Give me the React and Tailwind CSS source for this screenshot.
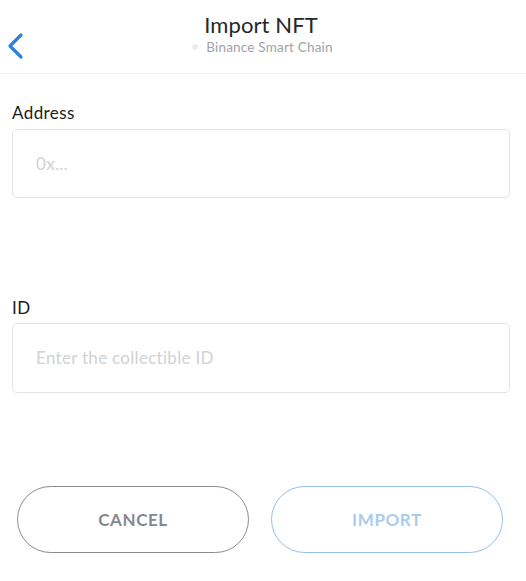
export default function App() {
  return (
    <div className="w-[526px] h-[581px] bg-white flex flex-col font-['Lato',sans-serif] text-[#24272a]">
      <header className="relative h-[74px] border-b border-[#f0f0f0] flex flex-col items-center">
        <button className="absolute left-[6px] top-[32px] p-0" aria-label="Back">
          <svg width="20" height="28" viewBox="0 0 20 28" fill="none">
            <path d="M15 3 L4 14 L15 25" stroke="#2f80d9" strokeWidth="3.2" strokeLinecap="round" strokeLinejoin="round" />
          </svg>
        </button>
        <h1 className="mt-[11px] pr-[4px] text-[22px] leading-[28px] tracking-[0.1px] text-[#24272a]">Import NFT</h1>
        <div className="flex items-center gap-[8px] pr-[1px]">
          <span className="w-[6px] h-[6px] rounded-full bg-[#ececec]" />
          <span className="text-[13.5px] leading-[16px] tracking-[0.2px] text-[#9fa3a8]">Binance Smart Chain</span>
        </div>
      </header>

      <main className="flex flex-col px-[12px] pt-[28px]">
        <label className="text-[17px] leading-[22px] tracking-[0.4px] text-[#1c1c1c]">Address</label>
        <div className="mt-[5px] h-[69px] w-[498px] rounded-[5px] border border-[#e3e3e3] flex items-center pl-[23px]">
          <span className="text-[17px] tracking-[0.3px] text-[#d0d2d4]">0x...</span>
        </div>

        <label className="mt-[99px] text-[17px] leading-[22px] tracking-[0.4px] text-[#1c1c1c]">ID</label>
        <div className="mt-[4px] h-[70px] w-[498px] rounded-[5px] border border-[#e3e3e3] flex items-center pl-[23px]">
          <span className="text-[17px] tracking-[0.3px] text-[#d0d2d4]">Enter the collectible ID</span>
        </div>

        <div className="mt-[93px] flex gap-[22px] pl-[5px]">
          <button className="w-[232px] h-[67px] rounded-full border-[1.5px] border-[#8a8c90] text-[17px] font-bold tracking-[0.6px] text-[#84898f]">
            CANCEL
          </button>
          <button className="w-[232px] h-[67px] rounded-full border-[1.5px] border-[#96c0ea] text-[17px] font-bold tracking-[0.6px] text-[#aacbed]">
            IMPORT
          </button>
        </div>
      </main>
    </div>
  );
}
